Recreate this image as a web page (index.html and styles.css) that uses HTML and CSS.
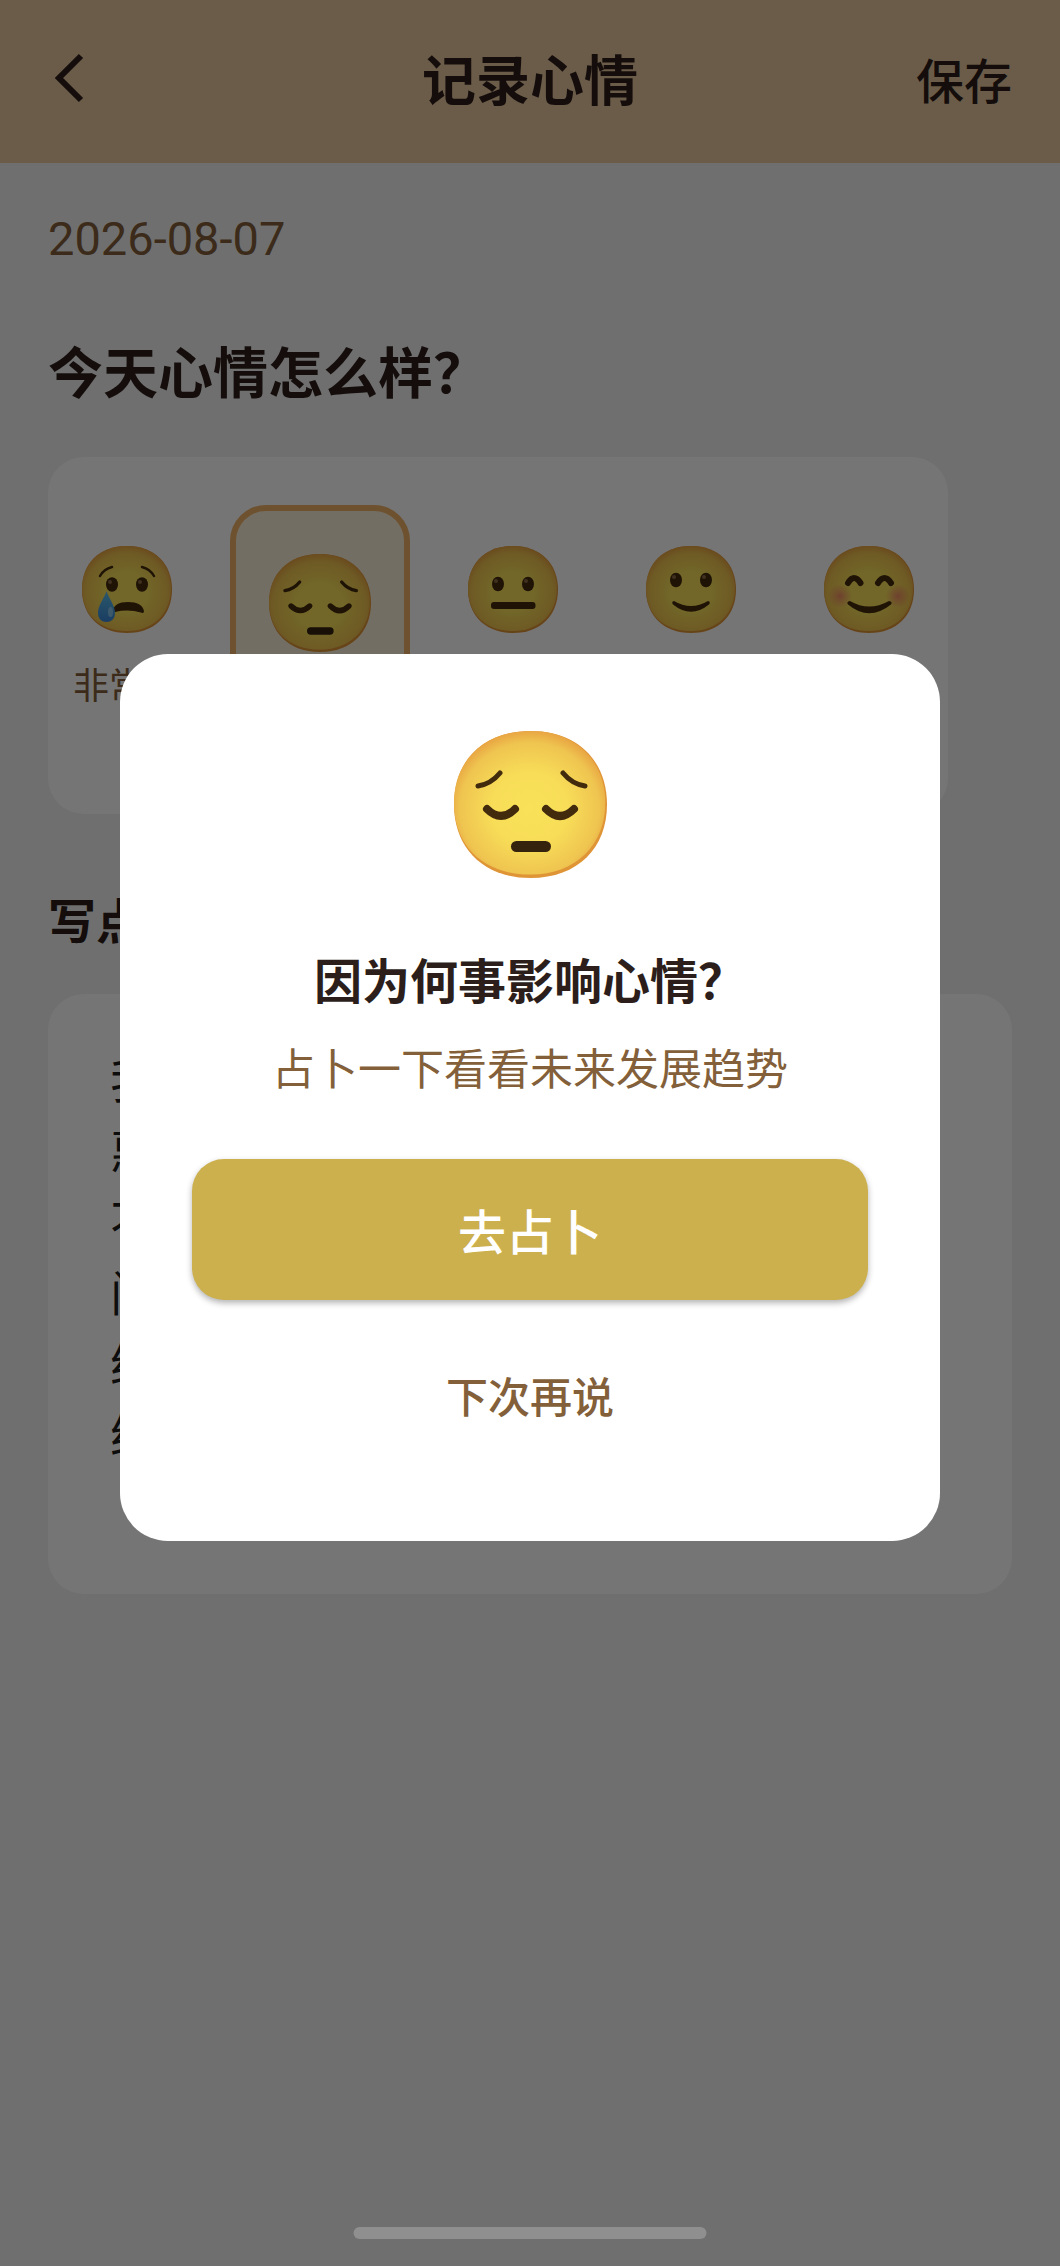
FILE: index.html
```html
<!DOCTYPE html>
<html lang="zh-CN">
<head>
    <meta charset="UTF-8">
    <meta name="viewport" content="width=device-width, initial-scale=1.0">
    <title>记录心情</title>
    <link rel="stylesheet" href="styles.css">
</head>
<body>
    <!-- Shared emoji shapes -->
    <svg class="sprite" aria-hidden="true">
        <defs>
            <radialGradient id="skin" cx="50%" cy="54%" r="54%">
                <stop offset="0" stop-color="#f9e159"/>
                <stop offset="0.45" stop-color="#f8de58"/>
                <stop offset="0.85" stop-color="#efc550"/>
                <stop offset="1" stop-color="#e9a643"/>
            </radialGradient>
            <radialGradient id="cheek">
                <stop offset="0" stop-color="#f0746c" stop-opacity="0.7"/>
                <stop offset="1" stop-color="#f0746c" stop-opacity="0"/>
            </radialGradient>
            <linearGradient id="tear" x1="0" y1="0" x2="0" y2="1">
                <stop offset="0" stop-color="#5cc0e8"/>
                <stop offset="1" stop-color="#3a86d8"/>
            </linearGradient>
            <symbol id="head" viewBox="0 0 90 87" preserveAspectRatio="none">
                <path d="M45 0C73 0 90 18 90 43.500C90 69 73 87 45 87C17 87 0 69 0 43.500C0 18 17 0 45 0Z" fill="#df9536"/>
                <path d="M45 0C72 0 89 18 89 42.500C89 67 72 85 45 85C17 85 0 68 0 42.500C0 18 17 0 45 0Z" fill="url(#skin)"/>
            </symbol>
            <symbol id="pensive" viewBox="0 0 153 147">
                <use href="#head" width="153" height="147"/>
                <g fill="none" stroke="#422b0d" stroke-linecap="round">
                    <path d="M24 55Q37 53 46 42M109 42Q118 53 131 55" stroke-width="5"/>
                    <path d="M33 78Q47 92 61 78M92 78Q106 92 120 78" stroke-width="8"/>
                </g>
                <rect x="57" y="110" width="40" height="11" rx="5.500" fill="#35230e"/>
            </symbol>
            <symbol id="cry" viewBox="0 0 90 87">
                <use href="#head" width="90" height="87"/>
                <path d="M18 30Q22 23 30 21M60 21Q68 23 72 30" fill="none" stroke="#422b0d" stroke-width="2.500" stroke-linecap="round"/>
                <g fill="#422b0d">
                    <ellipse cx="30" cy="38.500" rx="6" ry="7.300"/>
                    <ellipse cx="60" cy="38.500" rx="6" ry="7.300"/>
                    <path d="M31 65Q32 56 46 56Q60 56 62 65Q62 68 59 66.500Q46 63 33 66Z"/>
                </g>
                <g fill="#8a6a45">
                    <circle cx="28" cy="36" r="2"/>
                    <circle cx="58" cy="36" r="2"/>
                </g>
                <path d="M24.500 45C27 53 33 59 33 67C33 73 29 76 24.500 76C20 76 16 73 16 67C16 59 22 53 24.500 45Z" fill="url(#tear)"/>
                <ellipse cx="28.500" cy="66" rx="2.500" ry="5" fill="#9fd4f0" opacity="0.7"/>
            </symbol>
            <symbol id="neutral" viewBox="0 0 90 87">
                <use href="#head" width="90" height="87"/>
                <g fill="#422b0d">
                    <ellipse cx="30" cy="38" rx="6" ry="7.300"/>
                    <ellipse cx="60" cy="38" rx="6" ry="7.300"/>
                    <rect x="23" y="56" width="44.500" height="7" rx="3"/>
                </g>
                <g fill="#8a6a45">
                    <circle cx="28" cy="35" r="2"/>
                    <circle cx="58" cy="35" r="2"/>
                </g>
            </symbol>
            <symbol id="smile" viewBox="0 0 90 87">
                <use href="#head" width="90" height="87"/>
                <g fill="#422b0d">
                    <ellipse cx="30" cy="34" rx="6" ry="7.300"/>
                    <ellipse cx="60" cy="34" rx="6" ry="7.300"/>
                    <path d="M28 55Q45 65 62 55Q65 55.500 63 58.500Q45 73 27 58.500Q25 55.500 28 55Z"/>
                </g>
                <g fill="#8a6a45">
                    <circle cx="28" cy="31" r="2"/>
                    <circle cx="58" cy="31" r="2"/>
                </g>
            </symbol>
            <symbol id="happy" viewBox="0 0 90 87">
                <use href="#head" width="90" height="87"/>
                <circle cx="16" cy="50" r="12" fill="url(#cheek)"/>
                <circle cx="74" cy="50" r="12" fill="url(#cheek)"/>
                <path d="M24 37Q30 27 36.500 37M54 37Q60.500 27 67 37" fill="none" stroke="#422b0d" stroke-width="6" stroke-linecap="round" stroke-linejoin="round"/>
                <path d="M26 55Q45 66 65 55Q69 55.500 67 58.500Q45 76 24 58.500Q22 55.500 26 55Z" fill="#422b0d"/>
            </symbol>
        </defs>
    </svg>

    <header class="header">
        <button class="back-btn" type="button" aria-label="返回">
            <svg viewBox="0 0 36 54"><path d="M33 5L11 27L33 49" fill="none" stroke="currentColor" stroke-width="6"/></svg>
        </button>
        <h1>记录心情</h1>
        <button class="save-btn" type="button">保存</button>
    </header>

    <main class="content">
        <time class="date" datetime="2026-08-07">2026-08-07</time>

        <h2 class="question">今天心情怎么样？</h2>
        <div class="moods">
            <button class="mood" type="button">
                <svg class="mood-icon"><use href="#cry"/></svg>
                <span>非常差</span>
            </button>
            <button class="mood selected" type="button" aria-pressed="true">
                <svg class="mood-icon"><use href="#pensive"/></svg>
                <span>差</span>
            </button>
            <button class="mood" type="button">
                <svg class="mood-icon"><use href="#neutral"/></svg>
                <span>一般</span>
            </button>
            <button class="mood" type="button">
                <svg class="mood-icon"><use href="#smile"/></svg>
                <span>好</span>
            </button>
            <button class="mood" type="button">
                <svg class="mood-icon"><use href="#happy"/></svg>
                <span>非常好</span>
            </button>
        </div>

        <label class="note-label" for="note">写点什么</label>
        <textarea class="note" id="note">我
惠
不
问
给
给</textarea>
    </main>

    <!-- Divination Popup -->
    <div class="overlay">
        <div class="dialog" role="dialog" aria-modal="true" aria-labelledby="dialog-title">
            <svg class="dialog-icon"><use href="#pensive"/></svg>
            <h2 class="dialog-title" id="dialog-title">因为何事影响心情？</h2>
            <p class="dialog-text">占卜一下看看未来发展趋势</p>
            <button class="go-btn" type="button">去占卜</button>
            <button class="later-btn" type="button">下次再说</button>
        </div>
    </div>

    <div class="home-bar"></div>
</body>
</html>
```

FILE: styles.css
```css
* {
    box-sizing: border-box;
}

body {
    font-family: "Noto Sans CJK SC", sans-serif;
    background-color: #f2f2f2;
    color: #2c1e1a;
    margin: 0;
    min-height: 100vh;
}

h1, h2, p {
    margin: 0;
}

button {
    font-family: inherit;
    color: inherit;
    background: none;
    border: none;
    padding: 0;
    cursor: pointer;
}

.sprite {
    position: absolute;
    width: 0;
    height: 0;
}

/* Header */
.header {
    display: grid;
    grid-template-columns: 1fr auto 1fr;
    align-items: center;
    height: 163px;
    padding: 0 48px 8px;
    background-color: #e9c89f;
}

.header h1 {
    font-size: 54px;
    line-height: 80px;
    font-weight: bold;
}

.back-btn {
    justify-self: start;
    width: 36px;
    height: 54px;
}

.back-btn svg {
    display: block;
    width: 100%;
    height: 100%;
}

.save-btn {
    justify-self: end;
    font-size: 48px;
    line-height: 80px;
    font-weight: 500;
}

/* Content */
.content {
    padding: 46px 48px;
}

.date {
    display: block;
    font-family: Roboto, sans-serif;
    font-size: 47px;
    line-height: 60px;
    color: #835f3a;
}

.question {
    margin-top: 60px;
    font-size: 55px;
    line-height: 80px;
}

.moods {
    display: flex;
    gap: 70px;
    width: fit-content;
    margin-top: 48px;
    padding: 48px 25px;
    background-color: #fff;
    border-radius: 36px;
}

.mood {
    display: flex;
    flex-direction: column;
    align-items: center;
    gap: 23px;
    width: 108px;
    height: 261px;
    padding-top: 41px;
    font-size: 36px;
    line-height: 54px;
    color: #835f3a;
}

.mood-icon {
    width: 90px;
    height: 87px;
}

.mood.selected {
    width: 180px;
    margin: 0 -21px;
    padding-top: 43px;
    background-color: #faefd7;
    border: 6px solid #f0b268;
    border-radius: 36px;
}

.mood.selected .mood-icon {
    width: 102px;
    height: 98px;
}

.note-label {
    display: block;
    margin-top: 64px;
    font-size: 48px;
    line-height: 80px;
    font-weight: bold;
}

.note {
    display: block;
    width: 100%;
    height: 600px;
    margin-top: 36px;
    padding: 48px 62px;
    font-family: inherit;
    font-size: 48px;
    line-height: 71px;
    color: #1d1d1d;
    background-color: #fff;
    border: none;
    border-radius: 36px;
    resize: none;
}

/* Popup */
.overlay {
    display: flex;
    align-items: center;
    justify-content: center;
    position: fixed;
    top: 0;
    left: 0;
    width: 100%;
    height: 100%;
    padding: 0 120px 72px;
    background-color: rgba(0, 0, 0, 0.54);
}

.dialog {
    display: flex;
    flex-direction: column;
    align-items: center;
    width: 100%;
    padding: 77px 72px 98px;
    background-color: #fff;
    border-radius: 48px;
}

.dialog-icon {
    width: 153px;
    height: 147px;
}

.dialog-title {
    margin-top: 70px;
    font-size: 48px;
    line-height: 60px;
}

.dialog-text {
    margin-top: 31px;
    font-size: 43px;
    line-height: 54px;
    color: #835f3a;
}

.go-btn {
    width: 100%;
    height: 141px;
    margin-top: 66px;
    font-size: 48px;
    font-weight: 500;
    color: #fff;
    background-color: #cdb04e;
    border-radius: 32px;
    box-shadow: 0 3px 6px rgba(0, 0, 0, 0.3);
}

.later-btn {
    height: 96px;
    margin-top: 47px;
    font-size: 42px;
    font-weight: 500;
    color: #835f3a;
}

/* System home indicator */
.home-bar {
    position: fixed;
    bottom: 27px;
    left: 50%;
    width: 353px;
    height: 12px;
    transform: translateX(-50%);
    background-color: #8f8f8f;
    border-radius: 6px;
}
```
